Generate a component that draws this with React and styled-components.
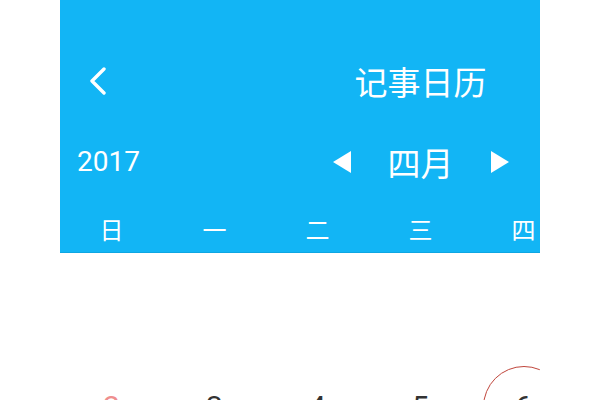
import React from "react";
import styled, { createGlobalStyle } from "styled-components";

const GlobalStyle = createGlobalStyle`
  html, body {
    margin: 0;
    padding: 0;
    background: #ffffff;
  }
  body {
    font-family: Roboto, "Noto Sans CJK SC", sans-serif;
  }
`;

const CELL = 103;

const Page = styled.div`
  display: flex;
  justify-content: center;
  height: 400px;
  overflow: hidden;
`;

const Screen = styled.div`
  width: 480px;
  height: 400px;
  overflow: hidden;
  background: #ffffff;
`;

const Inner = styled.div`
  width: ${CELL * 7}px;
`;

const Banner = styled.div`
  background: #12b5f5;
  color: #ffffff;
  box-shadow: 0 1px 0 #0ea6e2;
`;

const TopBar = styled.div`
  display: grid;
  grid-template-columns: 1fr auto 1fr;
  align-items: center;
  height: 82px;
  padding-top: 40px;
`;

const BackButton = styled.button`
  justify-self: start;
  display: flex;
  align-items: center;
  margin-left: 28px;
  padding: 0;
  border: 0;
  background: none;
  color: #ffffff;
  cursor: pointer;
`;

const Title = styled.h1`
  margin: 0;
  font-family: "Noto Sans CJK SC", sans-serif;
  font-size: 33px;
  font-weight: 400;
  line-height: 1;
`;

const MonthRow = styled.div`
  display: grid;
  grid-template-columns: 1fr auto 1fr;
  align-items: center;
  height: 80px;
`;

const Year = styled.span`
  justify-self: start;
  margin-left: 17px;
  font-family: Roboto, sans-serif;
  font-size: 28px;
  line-height: 1;
`;

const MonthNav = styled.div`
  display: flex;
  align-items: center;
  gap: 37px;
`;

const Arrow = styled.button`
  display: flex;
  padding: 0;
  border: 0;
  background: none;
  color: #ffffff;
  cursor: pointer;
`;

const Month = styled.span`
  font-family: "Noto Sans CJK SC", sans-serif;
  font-size: 33px;
  line-height: 1;
`;

const Grid = styled.div`
  display: grid;
  grid-template-columns: repeat(7, ${CELL}px);
`;

const WeekDay = styled.div`
  height: 50px;
  display: flex;
  align-items: center;
  justify-content: center;
  font-family: "Noto Sans CJK SC", sans-serif;
  font-size: 24px;
  padding-top: 2px;
  box-sizing: border-box;
`;

const Day = styled.div`
  height: ${CELL}px;
  display: flex;
  align-items: center;
  justify-content: center;
`;

const DayNumber = styled.span`
  width: 82px;
  height: 82px;
  box-sizing: border-box;
  border-radius: 50%;
  border: 1.5px solid ${(p) => (p.$today ? "#c0463c" : "transparent")};
  display: flex;
  align-items: center;
  justify-content: center;
  font-family: Roboto, sans-serif;
  font-size: 30px;
  color: ${(p) => (p.$weekend ? "#ef8f8f" : "#333333")};
`;

const weekDays = ["日", "一", "二", "三", "四", "五", "六"];

const cells = [
  ...Array(6).fill(null),
  ...Array.from({ length: 30 }, (_, i) => i + 1),
];

const ChevronLeft = () => (
  <svg width="20" height="28" viewBox="0 0 20 28" fill="none">
    <path
      d="M16 2 L4 14 L16 26"
      stroke="currentColor"
      strokeWidth="3.4"
      strokeLinecap="round"
      strokeLinejoin="round"
    />
  </svg>
);

const Triangle = ({ dir }) => (
  <svg width="18" height="22" viewBox="0 0 18 22">
    <path
      d={dir === "left" ? "M18 0 L18 22 L0 11 Z" : "M0 0 L0 22 L18 11 Z"}
      fill="currentColor"
    />
  </svg>
);

export default function App() {
  return (
    <>
      <GlobalStyle />
      <Page>
        <Screen>
          <Inner>
            <Banner>
              <TopBar>
                <BackButton aria-label="返回">
                  <ChevronLeft />
                </BackButton>
                <Title>记事日历</Title>
                <span />
              </TopBar>
              <MonthRow>
                <Year>2017</Year>
                <MonthNav>
                  <Arrow aria-label="上个月">
                    <Triangle dir="left" />
                  </Arrow>
                  <Month>四月</Month>
                  <Arrow aria-label="下个月">
                    <Triangle dir="right" />
                  </Arrow>
                </MonthNav>
                <span />
              </MonthRow>
              <Grid>
                {weekDays.map((d) => (
                  <WeekDay key={d}>{d}</WeekDay>
                ))}
              </Grid>
            </Banner>
            <Grid>
              {cells.map((n, i) => (
                <Day key={i}>
                  {n && (
                    <DayNumber $weekend={i % 7 === 0} $today={n === 6}>
                      {n}
                    </DayNumber>
                  )}
                </Day>
              ))}
            </Grid>
          </Inner>
        </Screen>
      </Page>
    </>
  );
}
